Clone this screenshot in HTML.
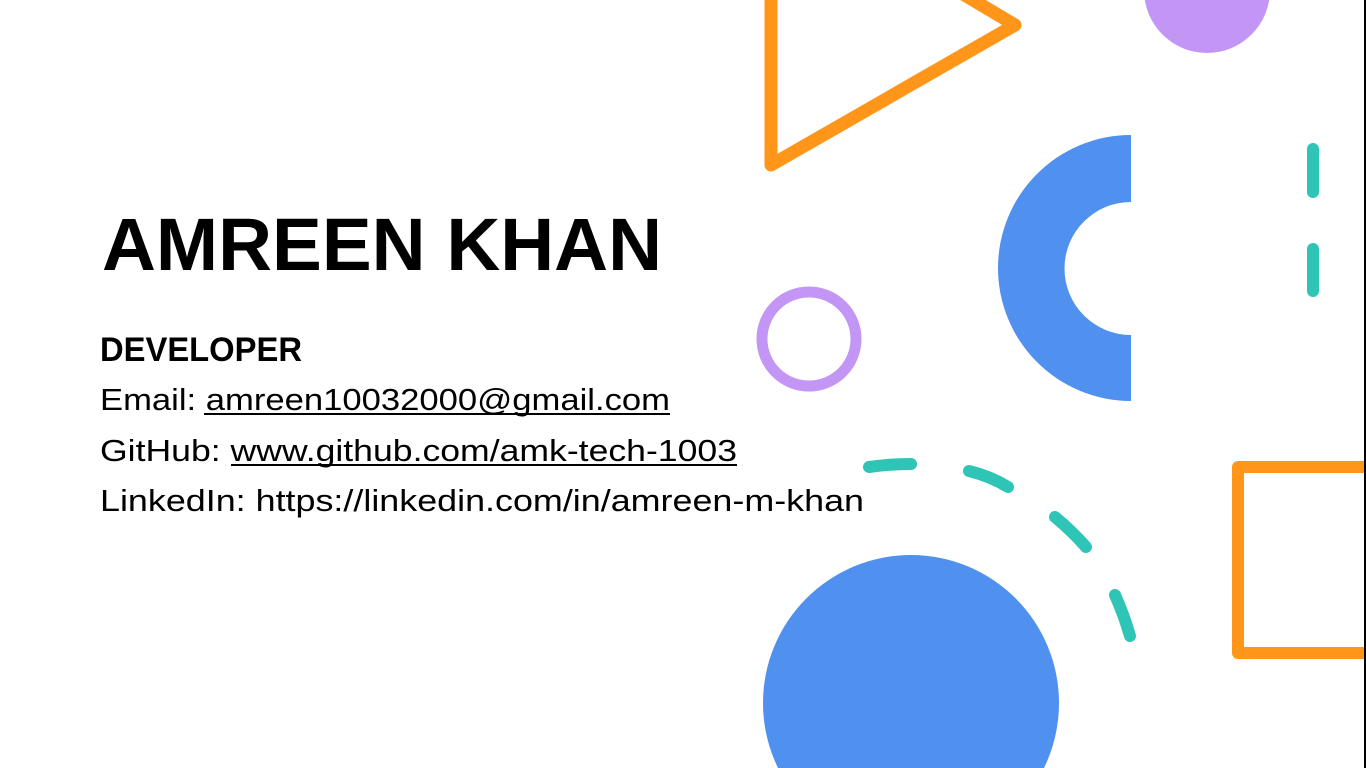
<!DOCTYPE html>
<html><head><meta charset="utf-8"><style>
html,body{margin:0;padding:0;background:#fff;width:1366px;height:768px;overflow:hidden;}
svg{display:block}
</style></head><body>
<svg width="1366" height="768" viewBox="0 0 1366 768" xmlns="http://www.w3.org/2000/svg">
<rect width="1366" height="768" fill="#fff"/>
<polygon points="771,-120 771,165 1015,25" fill="none" stroke="#FF961A" stroke-width="13" stroke-linejoin="round"/>
<circle cx="1207" cy="-10" r="63" fill="#C396F5"/>
<path d="M1131,135 A133,133 0 0 0 1131,401 L1131,335 A66,66 0 0 1 1131,202 Z" fill="#5090EE"/>
<circle cx="809" cy="339" r="47" fill="none" stroke="#C396F5" stroke-width="11"/>
<g stroke="#2EC4B6" stroke-width="12" stroke-linecap="round" fill="none">
<line x1="1313" y1="149" x2="1313" y2="192"/>
<line x1="1313" y1="249" x2="1313" y2="291"/>
<path d="M869,467 Q890,464 911,464"/>
<path d="M969,471 Q990,476 1008,487"/>
<path d="M1055,517 Q1072,531 1086,547"/>
<path d="M1115,595 Q1124,615 1130,636"/>
</g>
<circle cx="911" cy="703" r="148" fill="#5090EE"/>
<rect x="1238" y="467" width="140" height="186" fill="none" stroke="#FF961A" stroke-width="12" stroke-linejoin="round"/>
<rect x="1364" y="0" width="2" height="768" fill="#000"/>
<g font-family="Liberation Sans, sans-serif" fill="#000">
<text x="102" y="270" font-size="74" font-weight="bold" textLength="560" lengthAdjust="spacingAndGlyphs">AMREEN KHAN</text>
<text x="100" y="361" font-size="34" font-weight="bold" textLength="202" lengthAdjust="spacingAndGlyphs">DEVELOPER</text>
<text x="100" y="410" font-size="31" textLength="570" lengthAdjust="spacingAndGlyphs">Email: amreen10032000@gmail.com</text>
<text x="100" y="461" font-size="31" textLength="637" lengthAdjust="spacingAndGlyphs">GitHub: www.github.com/amk-tech-1003</text>
<text x="100" y="511" font-size="31" textLength="764" lengthAdjust="spacingAndGlyphs">LinkedIn: https://linkedin.com/in/amreen-m-khan</text>
</g>
<rect x="204" y="413" width="466" height="2" fill="#000"/>
<rect x="231" y="464" width="506" height="2" fill="#000"/>
</svg>
</body></html>
